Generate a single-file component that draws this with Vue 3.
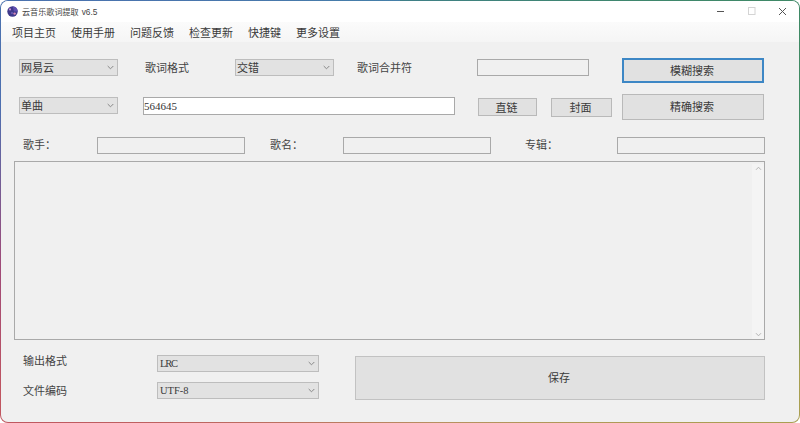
<script setup>
const menus = ['项目主页', '使用手册', '问题反馈', '检查更新', '快捷键', '更多设置']
</script>

<template>
  <div class="frame">
    <div class="window">
      <header class="titlebar">
        <svg class="logo" width="11" height="11" viewBox="0 0 11 11">
          <circle cx="5.5" cy="5.5" r="5.2" fill="#3f3a8c" />
          <path d="M5.5.3A5.2 5.2 0 0 1 10.7 5.5L7 5.5Z" fill="#5f4fb0" />
          <circle cx="3" cy="3.4" r="1.1" fill="#c58ad0" />
          <circle cx="7.6" cy="7.6" r="1.2" fill="#d88ab8" />
          <circle cx="5" cy="7" r=".8" fill="#8f78d8" />
        </svg>
        <span class="title">云音乐歌词提取</span>
        <span class="version">v6.5</span>
        <div class="controls">
          <svg width="9" height="9" viewBox="0 0 9 9"><path d="M1 4.5H8" stroke="#555" stroke-width="1" /></svg>
          <svg width="9" height="9" viewBox="0 0 9 9"><rect x="1.5" y=".5" width="6.5" height="7" fill="none" stroke="#d4d4d4" /></svg>
          <svg width="9" height="9" viewBox="0 0 9 9"><path d="M1 1L8 8M8 1L1 8" stroke="#555" stroke-width="1" fill="none" /></svg>
        </div>
      </header>

      <nav class="menu">
        <span v-for="m in menus" :key="m">{{ m }}</span>
      </nav>

      <main class="content">
        <section class="top">
          <div class="top-left">
            <div class="row row-1">
              <div class="select sel-small"><span>网易云</span><svg class="chev" width="7" height="5" viewBox="0 0 7 5"><path d="M.7 1L3.5 3.8 6.3 1" /></svg></div>
              <label class="lab-format">歌词格式</label>
              <div class="select sel-small"><span>交错</span><svg class="chev" width="7" height="5" viewBox="0 0 7 5"><path d="M.7 1L3.5 3.8 6.3 1" /></svg></div>
              <label class="lab-merge">歌词合并符</label>
              <input class="input merge" value="" readonly />
            </div>
            <div class="row row-2">
              <div class="select sel-small"><span>单曲</span><svg class="chev" width="7" height="5" viewBox="0 0 7 5"><path d="M.7 1L3.5 3.8 6.3 1" /></svg></div>
              <input class="input search" value="564645" readonly />
              <button class="btn link">直链</button>
              <button class="btn cover">封面</button>
            </div>
          </div>
          <div class="top-right">
            <button class="btn fuzzy">模糊搜索</button>
            <button class="btn exact">精确搜索</button>
          </div>
        </section>

        <section class="meta">
          <label class="m-label m1">歌手：</label>
          <input class="input meta-input" value="" readonly />
          <label class="m-label m2">歌名：</label>
          <input class="input meta-input" value="" readonly />
          <label class="m-label m3">专辑：</label>
          <input class="input meta-input" value="" readonly />
        </section>

        <section class="lyrics">
          <div class="lyrics-body"></div>
          <div class="scrollbar">
            <svg width="7" height="5" viewBox="0 0 7 5"><path d="M1 3.8L3.5 1.2 6 3.8" /></svg>
            <svg width="7" height="5" viewBox="0 0 7 5"><path d="M1 1.2L3.5 3.8 6 1.2" /></svg>
          </div>
        </section>

        <section class="bottom">
          <div class="options">
            <div class="opt">
              <label class="raised">输出格式</label>
              <div class="select sel-wide"><span class="latin lrc">LRC</span><svg class="chev" width="7" height="5" viewBox="0 0 7 5"><path d="M.7 1L3.5 3.8 6.3 1" /></svg></div>
            </div>
            <div class="opt">
              <label>文件编码</label>
              <div class="select sel-wide"><span class="latin">UTF-8</span><svg class="chev" width="7" height="5" viewBox="0 0 7 5"><path d="M.7 1L3.5 3.8 6.3 1" /></svg></div>
            </div>
          </div>
          <button class="btn save">保存</button>
        </section>
      </main>
    </div>
  </div>
</template>

<style>
html, body { margin: 0; background: #fff; overflow: hidden; }
</style>

<style scoped>
.frame {
  width: 800px;
  height: 423px;
  box-sizing: border-box;
  padding: 1px;
  border-radius: 8px;
  background: conic-gradient(from 0deg at 50% 50%, #3f7f88 0deg, #3f8a62 70deg, #3f8a5c 100deg, #a8a050 112deg, #b89060 170deg, #c05560 245deg, #a04a78 262deg, #4c6fb0 285deg, #447fa8 360deg);
  font-family: "Noto Sans CJK SC", "Liberation Sans", sans-serif;
  font-size: 11px;
  color: #3a3a3a;
}
.window {
  height: 100%;
  border-radius: 7px;
  overflow: hidden;
  background: #f0f0f0;
  display: flex;
  flex-direction: column;
}
.titlebar {
  height: 21px;
  flex: none;
  background: #fff;
  display: flex;
  align-items: center;
  padding-left: 6px;
}
.logo { flex: none; }
.title { font-size: 8.1px; margin-left: 4px; color: #444; }
.version { font-size: 8.3px; margin-left: 3px; color: #444; font-family: "Liberation Sans", sans-serif; }
.controls {
  margin-left: auto;
  margin-right: 12px;
  display: flex;
  gap: 22px;
  align-items: center;
}
.menu {
  height: 20px;
  flex: none;
  background: linear-gradient(#fbfbfb, #f5f5f5);
  display: flex;
  align-items: center;
  gap: 15px;
  padding-left: 11px;
}
.menu span { line-height: 20px; }
.content { flex: 1; min-height: 0; }
.top { display: flex; padding: 16px 0 0 18px; }
.top-left { width: 603px; flex: none; }
.row { display: flex; align-items: flex-start; }
.row-1 { height: 38px; padding-top: 1px; }
.row-1 label { line-height: 17px; color: #444; }
.lab-format { margin-left: 27px; width: 90px; }
.lab-merge { margin-left: 23px; width: 120px; }
.select {
  box-sizing: border-box;
  height: 17px;
  background: #e2e2e2;
  border: 1px solid #bdbdbd;
  display: flex;
  align-items: center;
  justify-content: space-between;
  padding: 0 3px 0 1px;
  line-height: 15px;
}
.sel-small { width: 99px; }
.sel-wide { width: 162px; padding-left: 2px; }
.chev { fill: none; stroke: #888; stroke-width: 1; }
.latin { font-family: "Liberation Serif", serif; font-size: 10.5px; }
.lrc { letter-spacing: -1.2px; }
.input {
  box-sizing: border-box;
  height: 17px;
  border: 1px solid #a9a9a9;
  background: #f0f0f0;
  padding: 0;
  margin: 0;
  outline: none;
  color: #333;
  font-family: "Liberation Serif", serif;
  font-size: 11px;
  border-radius: 0;
}
.merge { width: 112px; }
.search { width: 312px; margin-left: 25px; background: #fff; height: 18px; }
.btn {
  box-sizing: border-box;
  background: #e1e1e1;
  border: 1px solid #b9b9b9;
  padding: 0 2px 2px 0;
  margin: 0;
  font: inherit;
  color: #3a3a3a;
  border-radius: 0;
}
.link { width: 59px; height: 18px; margin: 1px 0 0 23px; }
.cover { width: 61px; height: 19px; margin: 1px 0 0 14px; }
.top-right { display: flex; flex-direction: column; gap: 11px; }
.fuzzy { width: 142px; height: 25px; border: 2px solid #3d87c5; }
.exact { width: 142px; height: 26px; }
.meta { display: flex; align-items: center; padding: 17px 0 0 22px; }
.m-label { width: 73px; height: 17px; flex: none; color: #444; line-height: 15px; }
.m1 { width: 74px; }
.m2 { margin-left: 25px; }
.m3 { margin-left: 34px; width: 92px; }
.meta-input { width: 148px; flex: none; }
.lyrics {
  box-sizing: border-box;
  margin: 7px 0 0 13px;
  width: 751px;
  height: 179px;
  border: 1px solid #a9a9a9;
  display: flex;
}
.lyrics-body { flex: 1; }
.scrollbar {
  width: 12px;
  flex: none;
  margin-top: 2px;
  background: #f4f4f4;
  display: flex;
  flex-direction: column;
  justify-content: space-between;
  align-items: center;
  padding: 2px 0;
  box-sizing: border-box;
}
.scrollbar svg { fill: none; stroke: #b5b5b5; stroke-width: 1; }
.bottom { display: flex; padding: 15px 0 0 22px; }
.options { width: 332px; flex: none; display: flex; flex-direction: column; gap: 10px; }
.opt { display: flex; align-items: center; }
.opt label { width: 134px; height: 17px; flex: none; color: #444; line-height: 17px; }
.opt label.raised { line-height: 11px; }
.save { width: 410px; height: 44px; margin-top: 1px; border-color: #c2c2c2; }
</style>
